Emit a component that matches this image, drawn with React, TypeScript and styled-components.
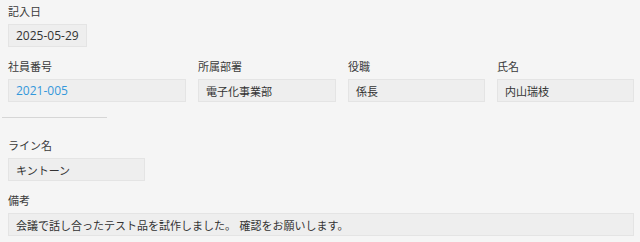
import React from 'react'
import styled, { createGlobalStyle } from 'styled-components'

const GlobalStyle = createGlobalStyle`
	html, body {
		margin: 0;
		padding: 0;
		background: #f5f5f5;
	}
	body {
		font-family: 'DejaVu Sans', 'Noto Sans CJK JP', sans-serif;
		font-size: 11px;
		color: #333;
	}
`

const Page = styled.div`
	width: 640px;
	height: 242px;
	padding-top: 5px;
	box-sizing: border-box;
	overflow: hidden;
`

const Row = styled.div<{ top?: number }>`
	display: flex;
	gap: 12px;
	padding-left: 8px;
	margin-top: ${p => p.top ?? 0}px;
`

const Field = styled.div<{ width: number }>`
	display: flex;
	flex-direction: column;
	width: ${p => p.width}px;
	flex: none;
`

const Label = styled.div`
	height: 16px;
	line-height: 16px;
	margin-bottom: 3px;
	color: #3a3a3a;
	white-space: nowrap;
`

const Value = styled.div<{ link?: boolean; latin?: boolean }>`
	height: 23px;
	box-sizing: border-box;
	padding: 0 7px;
	display: flex;
	align-items: center;
	background: #eeeeee;
	border: 1px solid #e4e4e4;
	color: ${p => (p.link ? '#3498db' : '#333')};
	font-family: ${p =>
		p.latin
			? "'Open Sans', 'Noto Sans CJK JP', sans-serif"
			: "'DejaVu Sans', 'Noto Sans CJK JP', sans-serif"};
	font-size: ${p => (p.latin ? 12 : 11)}px;
	white-space: nowrap;
	overflow: hidden;
`

const Divider = styled.hr`
	width: 105px;
	margin: 15px 0 0 2px;
	border: none;
	border-top: 1px solid #d6d6d6;
	height: 0;
`

type FieldProps = {
	label: string
	value: string
	width: number
	link?: boolean
	latin?: boolean
}

function FormField({ label, value, width, link, latin }: FieldProps) {
	return (
		<Field width={width}>
			<Label>{label}</Label>
			<Value link={link} latin={latin}>
				{value}
			</Value>
		</Field>
	)
}

export default function App() {
	return (
		<Page>
			<GlobalStyle />
			<Row>
				<FormField label="記入日" value="2025-05-29" width={79} latin />
			</Row>
			<Row top={13}>
				<FormField label="社員番号" value="2021-005" width={178} link latin />
				<FormField label="所属部署" value="電子化事業部" width={138} />
				<FormField label="役職" value="係長" width={137} />
				<FormField label="氏名" value="内山瑞枝" width={137} />
			</Row>
			<Divider />
			<Row top={21}>
				<FormField label="ライン名" value="キントーン" width={137} />
			</Row>
			<Row top={13}>
				<FormField
					label="備考"
					value="会議で話し合ったテスト品を試作しました。 確認をお願いします。"
					width={626}
				/>
			</Row>
		</Page>
	)
}
